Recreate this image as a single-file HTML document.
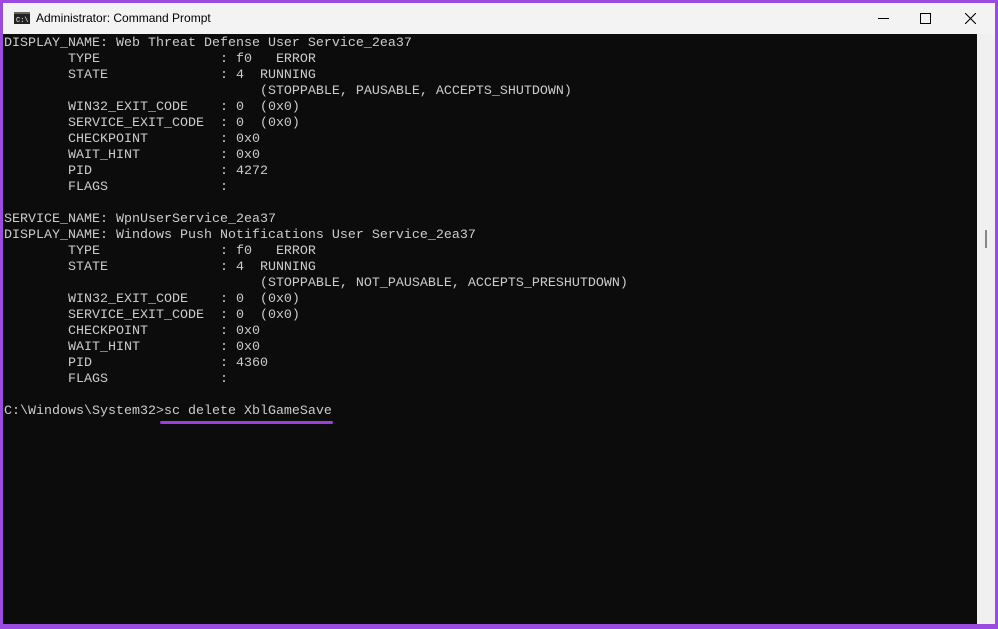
<!DOCTYPE html>
<html><head><style>
body{margin:0;width:998px;height:629px;background:#9b4be0;position:relative;overflow:hidden;font-family:"Liberation Sans",sans-serif}
#win{position:absolute;left:3px;top:3px;width:992px;height:621px;background:#f0f0f0}
#title{position:absolute;left:0;top:0;width:992px;height:31px;background:#f3f3f3;font-size:12px;color:#000}
#term{position:absolute;left:0;top:31px;width:974px;height:590px;background:#0c0c0c}
pre{margin:0;position:absolute;left:1px;top:2px;font-family:"Liberation Mono",monospace;font-size:13.33px;line-height:16px;color:#cccccc}
#sb{position:absolute;left:974px;top:31px;width:18px;height:590px;background:#f0f0f0}
</style></head><body>
<div id="win">
<div id="title">
<svg style="position:absolute;left:11px;top:9px" width="16" height="12"><rect x="0" y="0" width="16" height="12" fill="#222"/><rect x="0" y="0" width="16" height="2" fill="#666"/><text x="2" y="10" font-size="7" fill="#fff" font-family="Liberation Mono">C:\</text></svg>
<span style="position:absolute;left:33px;top:8px">Administrator: Command Prompt</span>
<div style="position:absolute;left:875px;top:15px;width:11px;height:1px;background:#000"></div>
<div style="position:absolute;left:917px;top:10px;width:9px;height:9px;border:1px solid #000"></div>
<svg style="position:absolute;left:962px;top:10px" width="11" height="11"><path d="M0 0L11 11M11 0L0 11" stroke="#000" stroke-width="1.1"/></svg>
</div>
<div id="term"><pre>DISPLAY_NAME: Web Threat Defense User Service_2ea37
        TYPE               : f0   ERROR
        STATE              : 4  RUNNING
                                (STOPPABLE, PAUSABLE, ACCEPTS_SHUTDOWN)
        WIN32_EXIT_CODE    : 0  (0x0)
        SERVICE_EXIT_CODE  : 0  (0x0)
        CHECKPOINT         : 0x0
        WAIT_HINT          : 0x0
        PID                : 4272
        FLAGS              :

SERVICE_NAME: WpnUserService_2ea37
DISPLAY_NAME: Windows Push Notifications User Service_2ea37
        TYPE               : f0   ERROR
        STATE              : 4  RUNNING
                                (STOPPABLE, NOT_PAUSABLE, ACCEPTS_PRESHUTDOWN)
        WIN32_EXIT_CODE    : 0  (0x0)
        SERVICE_EXIT_CODE  : 0  (0x0)
        CHECKPOINT         : 0x0
        WAIT_HINT          : 0x0
        PID                : 4360
        FLAGS              :

C:\Windows\System32&gt;sc delete XblGameSave</pre>
<div style="position:absolute;left:157px;top:387px;width:173px;height:3px;background:#9b3fe0;border-radius:2px"></div>
</div>
<div id="sb"><div style="position:absolute;left:8px;top:196px;width:2px;height:18px;background:#888"></div></div>
</div>
</body></html>
